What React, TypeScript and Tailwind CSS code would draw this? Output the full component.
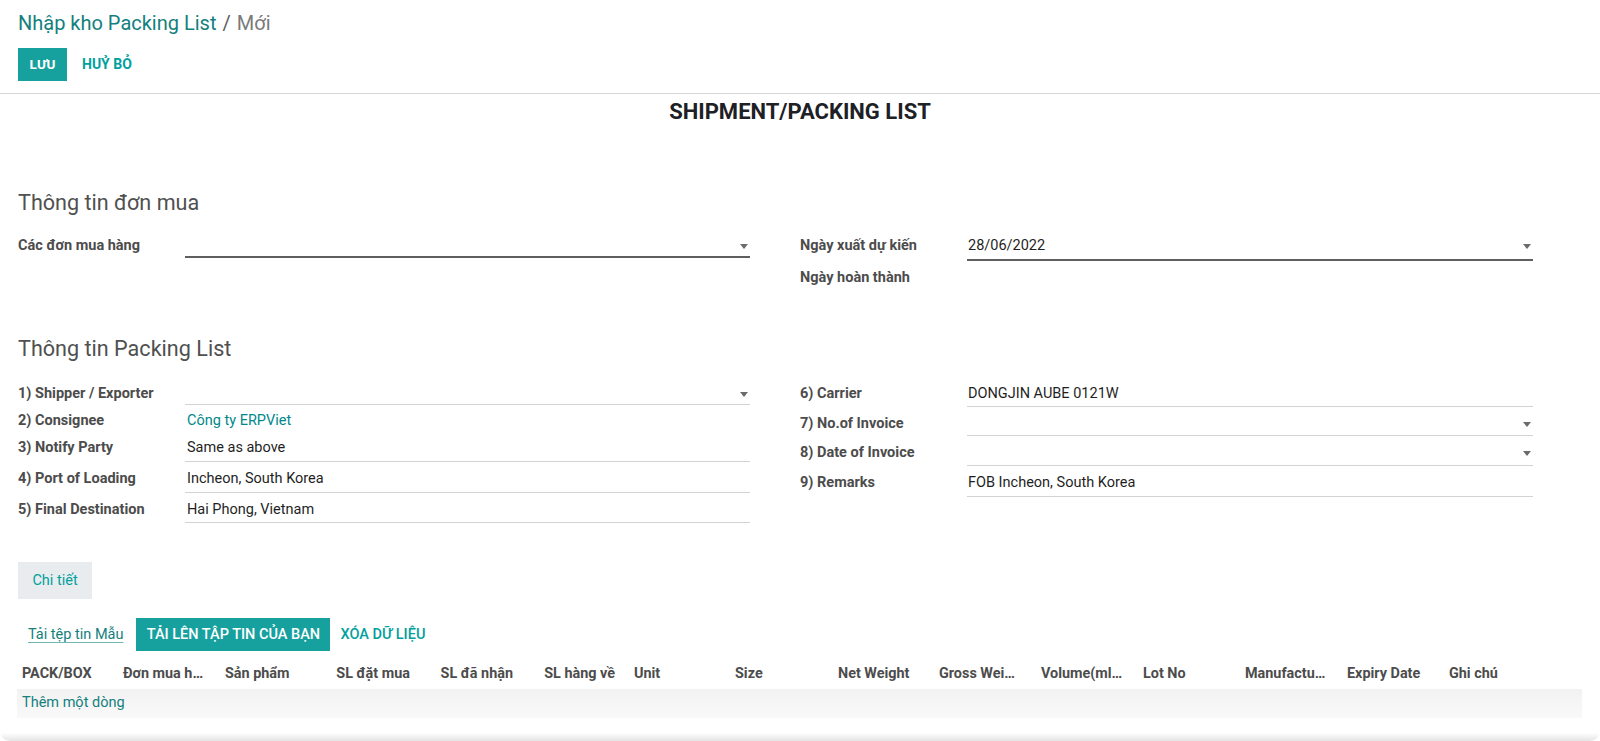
import React from "react";

const teal = "text-[#00a09d]";

function Caret() {
  return (
    <svg width="8" height="5" viewBox="0 0 8 5" className="mb-[7px] shrink-0">
      <path d="M0 0h8L4 5z" fill="#6b6b6b" />
    </svg>
  );
}

type FieldProps = {
  label?: string;
  value?: string;
  link?: boolean;
  caret?: boolean;
  line?: "none" | "thin" | "thick";
  h: string;
  pb: string;
  labelW?: string;
  pl?: string;
};

function Row({ label, value, link, caret, line = "thin", h, pb, labelW = "w-[167px]", pl = "pl-[2px]" }: FieldProps) {
  const border =
    line === "thick"
      ? "border-b-2 border-[#5f5f5f]"
      : line === "thin"
      ? "border-b border-[#d3d3d3]"
      : "border-b border-transparent";
  return (
    <div className={`flex items-end ${h}`}>
      <div className={`${labelW} shrink-0 ${border} border-transparent ${pb} text-[14.5px] font-bold leading-[20px] text-[#4c4c4c]`}>
        {label}
      </div>
      {line === "none" && !value ? null : (
        <div className={`flex h-full flex-1 items-end justify-between ${pl} pr-[2px] ${pb} ${border}`}>
          <span className={`text-[14.5px] leading-[20px] ${link ? "text-[#00888a]" : "text-[#1f1f1f]"}`}>{value}</span>
          {caret && <Caret />}
        </div>
      )}
    </div>
  );
}

const columns = [
  { name: "PACK/BOX", cls: "pl-[5px]" },
  { name: "Đơn mua h…", cls: "pl-[4px]" },
  { name: "Sản phẩm", cls: "pl-[4px]" },
  { name: "SL đặt mua", cls: "pr-[15px] text-right" },
  { name: "SL đã nhận", cls: "pr-[14px] text-right" },
  { name: "SL hàng về", cls: "pr-[14px] text-right" },
  { name: "Unit", cls: "pl-[5px]" },
  { name: "Size", cls: "pl-[4px]" },
  { name: "Net Weight", cls: "pl-[5px]" },
  { name: "Gross Wei…", cls: "pl-[4px]" },
  { name: "Volume(ml…", cls: "pl-[4px]" },
  { name: "Lot No", cls: "pl-[4px]" },
  { name: "Manufactu…", cls: "pl-[4px]" },
  { name: "Expiry Date", cls: "pl-[4px]" },
  { name: "Ghi chú", cls: "pl-[4px]" },
];

export default function App() {
  return (
    <div className="relative h-[741px] w-full overflow-hidden rounded-b-[10px] bg-white font-['Roboto','Noto_Sans',sans-serif] text-[#212529]">
      {/* control panel */}
      <div className="border-b border-[#d6d6d6] px-[18px] pb-[12px] pt-[9px]">
        <div className="flex items-center text-[20px] leading-[28px]">
          <span className="text-[#13807d]">Nhập kho Packing List</span>
          <span className="mx-[6px] text-[#5c5c5c]">/</span>
          <span className="text-[#7a7a7a]">Mới</span>
        </div>
        <div className="mt-[11px] flex items-center">
          <button className="h-[33px] w-[49px] bg-[#17a19e] text-[13.5px] font-bold uppercase text-white">Lưu</button>
          <button className={`ml-[5px] h-[33px] px-[10px] text-[14px] font-bold uppercase ${teal}`}>Huỷ bỏ</button>
        </div>
      </div>

      {/* sheet */}
      <h1 className="mt-[6px] text-center text-[22px] font-bold leading-[24px] text-[#1d2125]">SHIPMENT/PACKING LIST</h1>

      <div className="px-[18px]">
        <h2 className="mt-[65px] text-[21.6px] leading-[28px] text-[#505050]">Thông tin đơn mua</h2>
        <div className="mt-[14px] grid grid-cols-[732px_733px] gap-x-[50px]">
          <div>
            <Row label="Các đơn mua hàng" caret line="thick" h="h-[27px]" pb="pb-0" />
          </div>
          <div>
            <Row label="Ngày xuất dự kiến" value="28/06/2022" caret line="thick" h="h-[30px]" pb="pb-[3px]" pl="pl-[1px]" />
            <Row label="Ngày hoàn thành" line="none" h="h-[32px]" pb="pb-[4px]" />
          </div>
        </div>

        <h2 className="mt-[42px] text-[21.6px] leading-[28px] text-[#505050]">Thông tin Packing List</h2>
        <div className="mt-[15px] grid grid-cols-[732px_733px] gap-x-[50px]">
          <div>
            <Row label="1) Shipper / Exporter" caret h="h-[27px]" pb="pb-0" />
            <Row label="2) Consignee" value="Công ty ERPViet" link line="none" h="h-[30px]" pb="pb-[3px]" />
            <Row label="3) Notify Party" value="Same as above" h="h-[27px]" pb="pb-[3px]" />
            <Row label="4) Port of Loading" value="Incheon, South Korea" h="h-[31px]" pb="pb-[3px]" />
            <Row label="5) Final Destination" value="Hai Phong, Vietnam" h="h-[30px]" pb="pb-[2px]" />
          </div>
          <div className="mt-[1px]">
            <Row label="6) Carrier" value="DONGJIN AUBE 0121W" h="h-[28px]" pb="pb-[2px]" pl="pl-[1px]" />
            <Row label="7) No.of Invoice" caret h="h-[29px]" pb="pb-[1px]" pl="pl-[1px]" />
            <Row label="8) Date of Invoice" caret h="h-[30px]" pb="pb-[2px]" pl="pl-[1px]" />
            <Row label="9) Remarks" value="FOB Incheon, South Korea" h="h-[31px]" pb="pb-[3px]" pl="pl-[1px]" />
          </div>
        </div>

        {/* notebook tab */}
        <div className="mt-[39px]">
          <div className={`inline-flex h-[37px] w-[74px] items-center justify-center bg-[#e9ecef] text-[14.5px] ${teal}`}>
            Chi tiết
          </div>
        </div>

        <div className="mt-[19px] flex h-[33px] items-center">
          <a className="ml-[10px] text-[14.5px] text-[#13807d] underline decoration-[#6fb8b5] underline-offset-[3px]">Tải tệp tin Mẫu</a>
          <button className="ml-[13px] h-[33px] w-[194px] bg-[#17a19e] text-[14.5px] font-medium text-white">TẢI LÊN TẬP TIN CỦA BẠN</button>
          <button className={`ml-[10px] text-[14.5px] font-medium ${teal}`}>XÓA DỮ LIỆU</button>
        </div>

        {/* one2many list */}
        <div className="-ml-[1px] mt-[7px] w-[1565px]">
          <div className="flex h-[31px] items-center">
            {columns.map((c) => (
              <div key={c.name} className={`w-[102px] shrink-0 whitespace-nowrap text-[14.4px] font-bold text-[#4c4c4c] ${c.cls}`}>
                {c.name}
              </div>
            ))}
          </div>
          <div className="flex h-[29px] items-center bg-gradient-to-b from-[#f2f2f2] to-[#f9f9f9] pb-[2px] pl-[5px] text-[14.5px] text-[#13807d]">
            Thêm một dòng
          </div>
        </div>
      </div>

      <div className="absolute inset-x-0 bottom-0 h-[8px] bg-gradient-to-b from-transparent to-[#e4e4e4]" />
    </div>
  );
}
